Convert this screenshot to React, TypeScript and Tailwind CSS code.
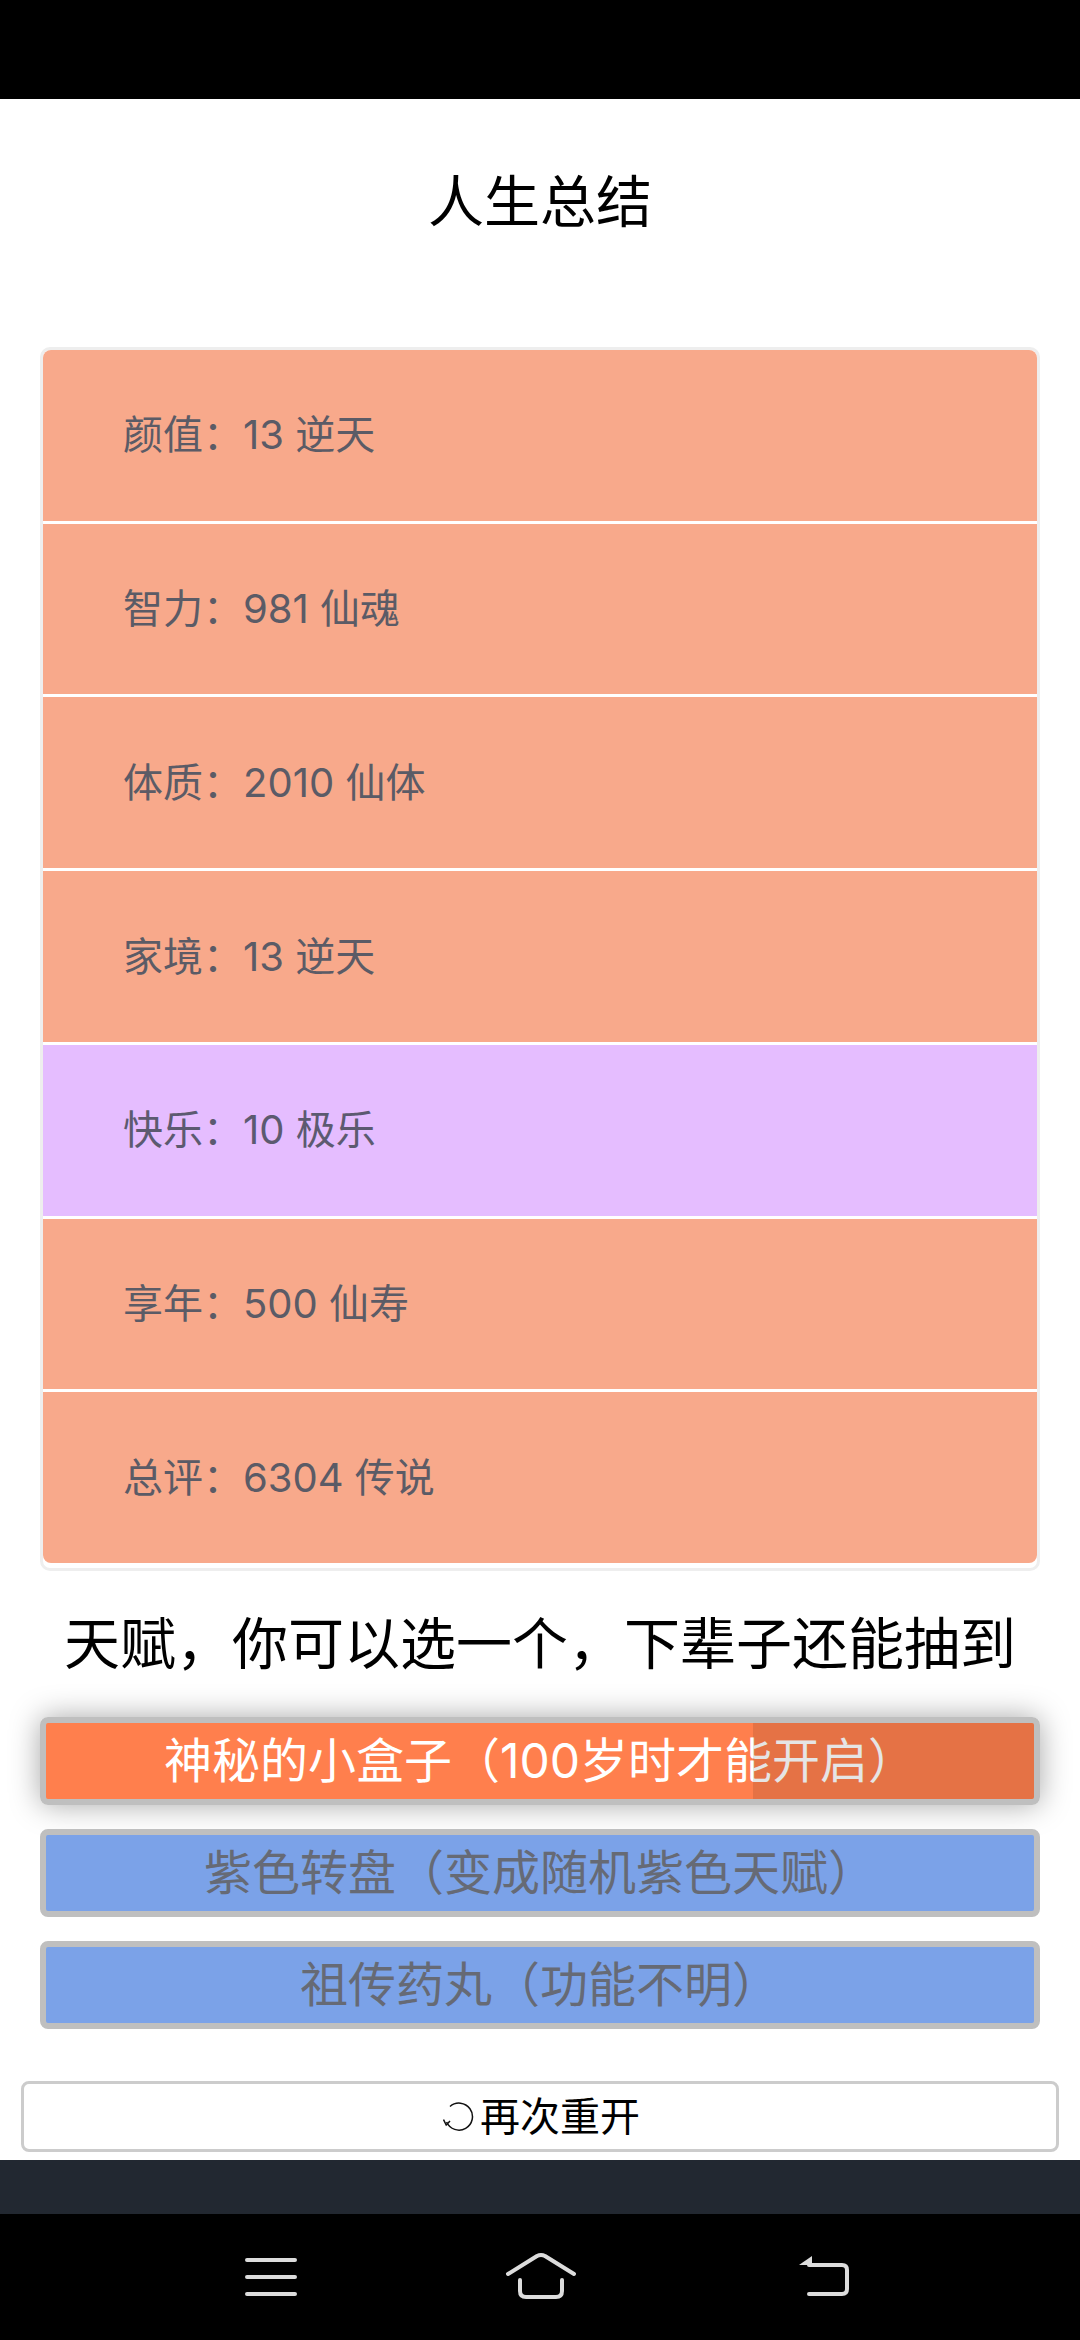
const stats = [
  { text: "颜值：13 逆天", purple: false },
  { text: "智力：981 仙魂", purple: false },
  { text: "体质：2010 仙体", purple: false },
  { text: "家境：13 逆天", purple: false },
  { text: "快乐：10 极乐", purple: true },
  { text: "享年：500 仙寿", purple: false },
  { text: "总评：6304 传说", purple: false },
];

const FONT = "font-['Inter','Noto_Sans_CJK_SC',sans-serif]";

function TalentButton({ label, active }: { label: string; active?: boolean }) {
  return (
    <div
      className={
        active
          ? "relative flex h-[88px] items-center justify-center overflow-hidden rounded-[8px] border-[6px] border-[#bfbfbf] bg-[#ff7f4d] text-[48px] text-white"
          : "relative flex h-[88px] items-center justify-center overflow-hidden rounded-[8px] border-[6px] border-[#bfbfbf] bg-[#7ba2e8] text-[48px] text-[#666a75]"
      }
    >
      <span className="whitespace-nowrap">{label}</span>
      {active && <span className="absolute inset-y-0 right-0 w-[281px] bg-black/10" />}
    </div>
  );
}

export default function App() {
  return (
    <div className={`flex h-[2340px] w-[1080px] flex-col overflow-hidden bg-white ${FONT}`}>
      {/* status bar */}
      <div className="h-[99px] shrink-0 bg-black" />

      <main className="flex-1">
        <h1 className="pt-[67px] text-center text-[56px] leading-[72px] font-normal text-black">人生总结</h1>

        {/* summary list */}
        <div className="mx-[40px] mt-[109px] flex h-[1224px] flex-col gap-[3px] rounded-[10px] border-[3px] border-[#eeeeee] pb-[5px]">
          {stats.map((row, i) => (
            <div
              key={row.text}
              className={
                (row.purple ? "bg-[#e5bdff] text-[#5c5a70] " : "bg-[#f8a98b] text-[#5b5b66] ") +
                (i === 0 ? "rounded-t-[8px] " : "") +
                (i === stats.length - 1 ? "rounded-b-[8px] " : "") +
                "flex h-[171px] items-center pl-[80px] text-[40px]"
              }
            >
              {row.text}
            </div>
          ))}
        </div>

        <h2 className="flex h-[146px] items-center justify-center text-[56px] font-normal text-black">
          天赋，你可以选一个，下辈子还能抽到
        </h2>

        {/* talents */}
        <div className="mx-[40px] flex flex-col gap-[24px]">
          <div className="rounded-[8px] shadow-[0_0_30px_rgba(0,0,0,0.35)]">
            <TalentButton label="神秘的小盒子（100岁时才能开启）" active />
          </div>
          <TalentButton label="紫色转盘（变成随机紫色天赋）" />
          <TalentButton label="祖传药丸（功能不明）" />
        </div>

        <button className="mx-[21px] mt-[52px] flex h-[71px] w-[1038px] items-center justify-center gap-[5px] rounded-[8px] border-[3px] border-[#cccccc] bg-white pl-[3px] text-[40px] text-black">
          <svg width="32" height="30" viewBox="0 0 32 30" fill="none" stroke="#111" strokeWidth="1.5">
            <path d="M7 4.5 A13.5 13.5 0 1 1 3.6 20" />
            <path d="M0.5 17.5 L3.2 23 L7 19" />
          </svg>
          再次重开
        </button>
      </main>

      {/* page footer strip */}
      <div className="h-[54px] shrink-0 bg-[#222831]" />

      {/* nav bar */}
      <nav className="relative h-[126px] shrink-0 bg-black">
        <svg className="absolute top-[38px] left-[244px]" width="54" height="46" viewBox="0 0 54 46" fill="none" stroke="#dcdcdc" strokeWidth="4" strokeLinecap="round">
          <path d="M3 8 H51 M3 25 H51 M3 42 H51" />
        </svg>
        <svg className="absolute top-[38px] left-[504px]" width="74" height="48" viewBox="0 0 74 48" fill="none" stroke="#dcdcdc" strokeWidth="4" strokeLinecap="round" strokeLinejoin="round">
          <path d="M4 22 L33 4 Q37 2 41 4 L70 22" />
          <path d="M16 28 V39 Q16 45 22 45 H52 Q58 45 58 39 V28" />
        </svg>
        <svg className="absolute top-[38px] left-[797px]" width="54" height="48" viewBox="0 0 54 48" fill="none" stroke="#dcdcdc" strokeWidth="4" strokeLinecap="round" strokeLinejoin="round">
          <path d="M12 13 H45 Q50 13 50 18 V37 Q50 42 45 42 H12" />
          <path d="M2 13 L15 4 V13 Z" fill="#dcdcdc" stroke="none" />
        </svg>
      </nav>
    </div>
  );
}
